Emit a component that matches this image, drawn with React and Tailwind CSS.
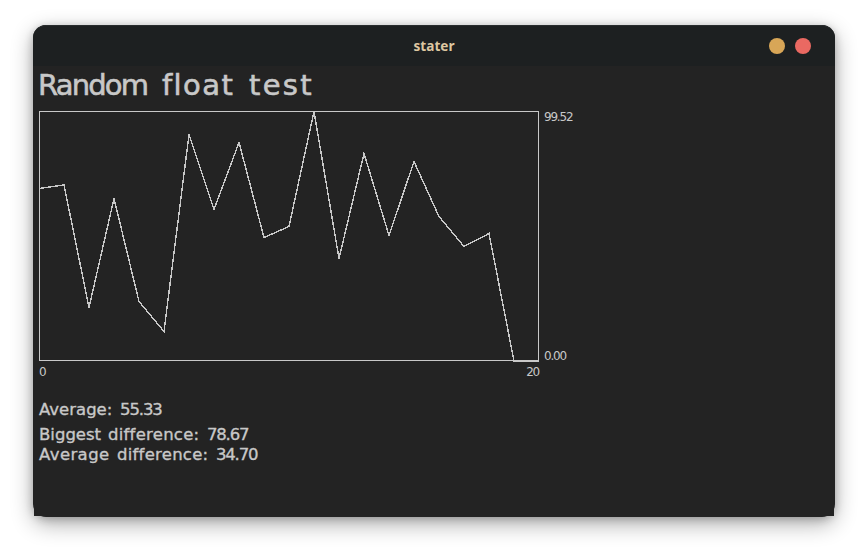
const samples = [77.5, 74, 196.5, 87.5, 190.5, 220.5, 23.5, 98.5, 31.5, 126.5, 115.5, 0.5, 147.5, 42.5, 124.5, 50.5, 105.5, 135.5, 122.5, 250, 250];

function Plot() {
  const points = samples.map((y, i) => `${i * 25},${y}`).join(" ");
  return (
    <svg width="500" height="251" className="block" shapeRendering="crispEdges" fill="none" stroke="#c8c8c8">
      <rect x="0.5" y="0.5" width="499" height="249" />
      <polyline points={points} strokeWidth="1.4" />
    </svg>
  );
}

function Stat({ className = "", children }) {
  return <div className={`flex h-5 text-[16.5px] leading-5 [-webkit-text-stroke:0.35px_#c8c8c8] ${className}`}>{children}</div>;
}

export default function App() {
  return (
    <div className="h-[558px] w-[868px] overflow-hidden bg-white pl-[33px] pt-[25px]">
      <div className="h-[492px] w-[802px] rounded-[13px] bg-[#232323] shadow-[0_7px_22px_rgba(0,0,0,0.32),0_2px_8px_rgba(0,0,0,0.22)]">
        <header className="grid h-[41px] grid-cols-[1fr_auto_1fr] items-center rounded-t-[13px] border-t border-[#292d2e] bg-[#1d2021] pr-6">
          <span />
          <h1 className="pl-6 font-['Noto_Sans',sans-serif] text-[13.6px] font-bold leading-5 text-[#ddc7a1]">stater</h1>
          <div className="flex justify-end gap-2.5">
            <i className="size-4 rounded-full bg-[#d8a657]" />
            <i className="size-4 rounded-full bg-[#ea6962]" />
          </div>
        </header>
        <main className="mx-px h-[450px] whitespace-nowrap bg-[#232323] pl-[5px] pt-[3px] font-['DejaVu_Sans',sans-serif] text-[#c8c8c8]">
          <h2 className="flex h-[42px] text-[29px] leading-8 [-webkit-text-stroke:0.6px_#c8c8c8]">
            <span className="-ml-px w-[124px] tracking-[-1.8px]">Random</span>
            <span className="w-[87px] tracking-[1.4px]">float</span>
            <span className="tracking-[2.3px]">test</span>
          </h2>
          <div className="flex gap-[5px] text-xs leading-3 tracking-[-1.2px]">
            <Plot />
            <div className="flex h-[251px] flex-col justify-between">
              <span>99.52</span>
              <span>0.00</span>
            </div>
          </div>
          <div className="flex w-[500px] justify-between pt-0.5 text-xs leading-4 tracking-[-1.2px]">
            <span>0</span>
            <span>20</span>
          </div>
          <Stat className="mt-5">
            <span className="w-[81px]">Average:</span>
            <span className="tracking-[-1.1px]">55.33</span>
          </Stat>
          <Stat className="mt-[5px]">
            <span className="w-[69px]">Biggest</span>
            <span className="w-[99px] tracking-[0.25px]">difference:</span>
            <span className="tracking-[-1.2px]">78.67</span>
          </Stat>
          <Stat>
            <span className="w-[78px] tracking-[0.4px]">Average</span>
            <span className="w-[99px] tracking-[0.25px]">difference:</span>
            <span className="tracking-[-1.2px]">34.70</span>
          </Stat>
        </main>
      </div>
    </div>
  );
}
